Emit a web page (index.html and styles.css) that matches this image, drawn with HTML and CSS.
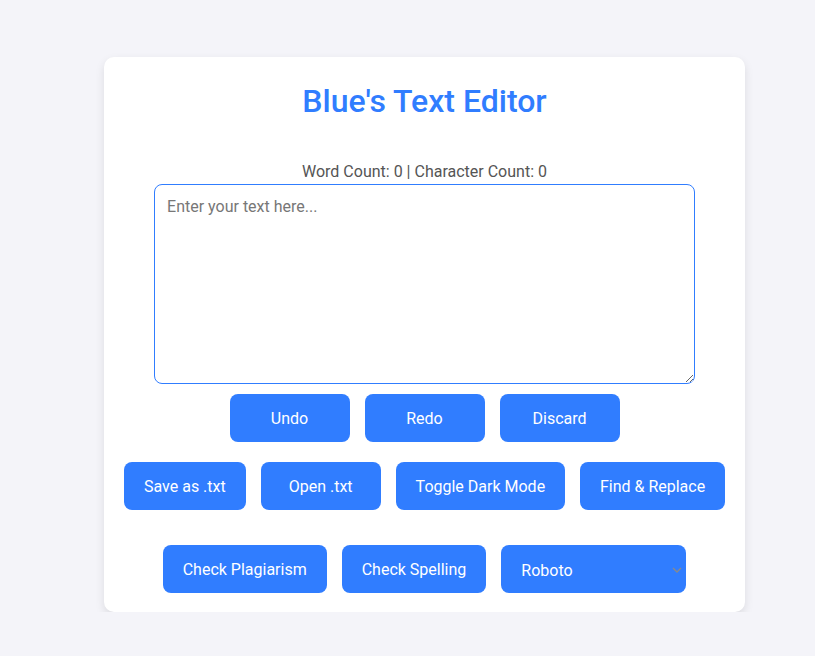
FILE: index.html
```html
<!DOCTYPE html>
<html lang="en">
<head>
<meta charset="utf-8">
<title>Blue's Text Editor</title>
<link rel="stylesheet" href="styles.css">
</head>
<body>
<div class="card">
  <h1 class="title">Blue's Text Editor</h1>
  <div class="counts">Word Count: 0 | Character Count: 0</div>
  <textarea class="editor" placeholder="Enter your text here..."></textarea>
  <div class="row row-1">
    <button class="btn">Undo</button>
    <button class="btn">Redo</button>
    <button class="btn">Discard</button>
  </div>
  <div class="row row-2">
    <button class="btn">Save as .txt</button>
    <button class="btn">Open .txt</button>
    <button class="btn">Toggle Dark Mode</button>
    <button class="btn">Find &amp; Replace</button>
  </div>
  <div class="row row-3">
    <button class="btn">Check Plagiarism</button>
    <button class="btn">Check Spelling</button>
    <span class="select-wrap">
      <select class="font-select">
        <option>Roboto</option>
        <option>Arial</option>
        <option>Times New Roman</option>
      </select>
      <svg class="chev" width="10" height="6" viewBox="0 0 10 6"><path d="M1 1l4 4 4-4" fill="none" stroke="#8a8a8a" stroke-width="1.3"/></svg>
    </span>
  </div>
</div>
</body>
</html>
```
FILE: styles.css
```css
html, body {
  margin: 0;
  padding: 0;
}
body {
  background: #f4f4f9;
  font-family: Roboto, "Liberation Sans", sans-serif;
  color: #555;
  padding-top: 57px;
  padding-left: 104px;
}
.card {
  width: 601px;
  padding: 20px 20px 19px;
  background: #fff;
  border-radius: 10px;
  box-shadow: 0 4px 10px rgba(0, 0, 0, 0.1);
}
.title {
  margin: 5px 0 0;
  font-size: 32px;
  font-weight: 500;
  color: #307dff;
  text-align: center;
}
.counts {
  margin-top: 42px;
  font-size: 16px;
  text-align: center;
  color: #555;
}
.editor {
  display: block;
  box-sizing: border-box;
  width: 90%;
  height: 200px;
  margin: 3px auto 0;
  padding: 12px;
  border: 1px solid #307dff;
  border-radius: 8px;
  font-family: Roboto, "Liberation Sans", sans-serif;
  font-size: 16px;
  color: #333;
  resize: vertical;
  outline: none;
}
.editor::placeholder {
  color: #777;
}
.row {
  display: flex;
  justify-content: center;
  gap: 15px;
}
.row-1 {
  margin-top: 10px;
}
.row-2 {
  margin-top: 20px;
}
.row-3 {
  margin-top: 35px;
}
.btn, .font-select {
  box-sizing: border-box;
  height: 48px;
  min-width: 120px;
  padding: 0 20px;
  border: none;
  border-radius: 8px;
  background: #307dff;
  color: #fff;
  font-family: Roboto, "Liberation Sans", sans-serif;
  font-size: 16px;
  white-space: nowrap;
}
.select-wrap {
  position: relative;
  display: inline-block;
}
.font-select {
  -webkit-appearance: none;
  appearance: none;
  width: 185px;
  padding: 2px 20px 0;
  outline: none;
}
.chev {
  position: absolute;
  right: 4px;
  top: 22px;
}
```
